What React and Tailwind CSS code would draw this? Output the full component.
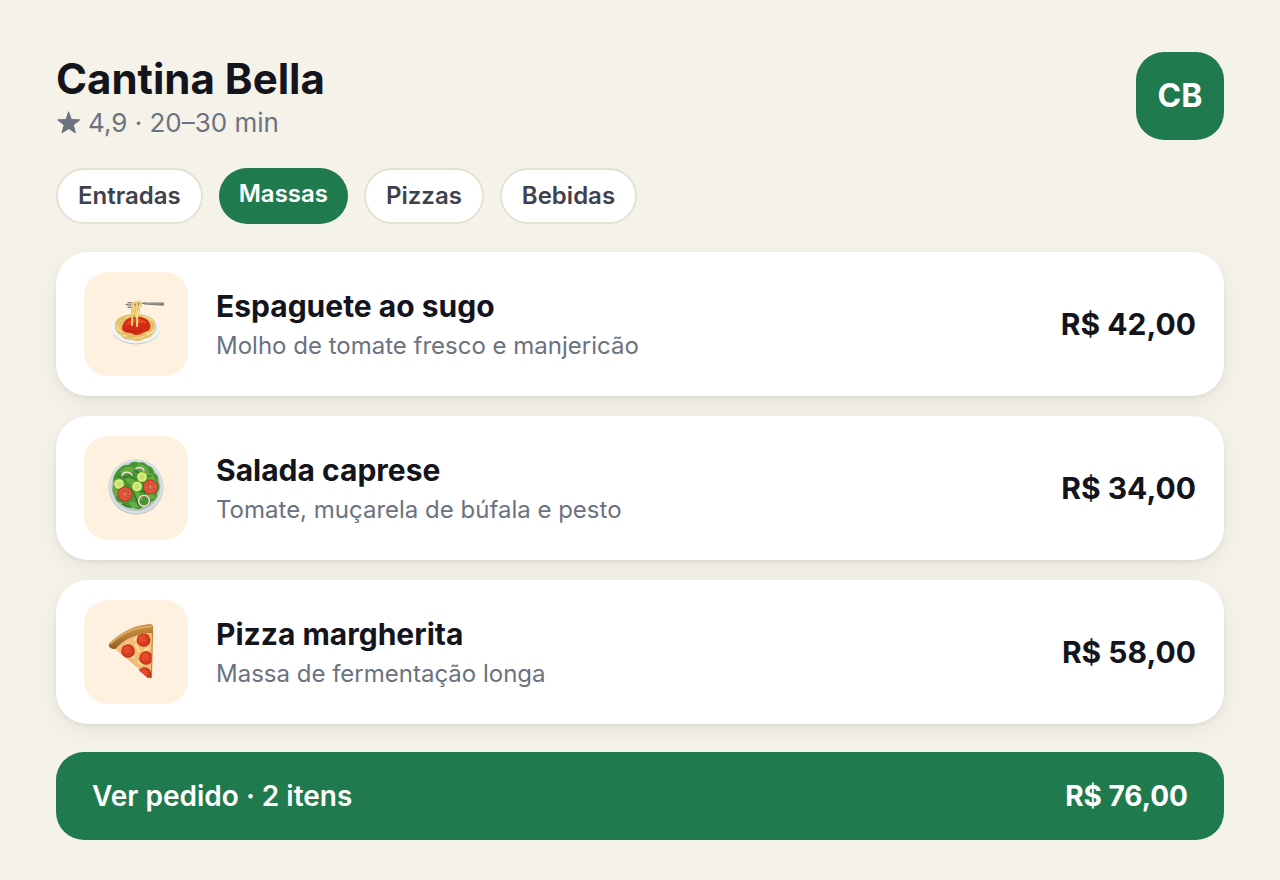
import React, { useState } from "react";
import clsx from "clsx";

function SpaghettiIcon() {
  return (
    <svg viewBox="0 1 72 66" className="w-[72px] h-[66px]" aria-hidden="true">
      <ellipse cx="36" cy="39.4" rx="24" ry="15" fill="#bcc6cc" />
      <ellipse cx="36" cy="38.2" rx="24.4" ry="15.2" fill="#f1f4f6" />
      <ellipse cx="36" cy="37.6" rx="21" ry="12.4" fill="#dde2e5" />
      <path d="M15 35c0-7 8-11 20-11 12 0 21 4 21 12 0 3-1 5-3 7 0 4-5 5-9 6-4 3-9 2-12 1-5 0-10-1-11-5-4-2-6-5-6-10z" fill="#e6c36a" />
      <g fill="none" stroke="#f7e19a" strokeWidth="1.2" strokeLinecap="round">
        <path d="M17 37c0-6 6-9 12-10M18 40c3 4 8 5 12 5M23 45c5 3 11 4 17 1M34 48c6 0 11-2 14-6M43 26c7 2 11 5 11 10M54 34c2 4-1 9-6 11M18 33c-2 4 0 8 4 9M45 45c4-1 7-3 8-6" />
      </g>
      <g fill="none" stroke="#b88a35" strokeWidth=".5" strokeLinecap="round">
        <path d="M18 41c4 3 8 4 13 4M26 47c7 1 14 0 20-3M51 31c4 4 3 8-1 11M17 34c1-3 4-5 8-6" />
      </g>
      <path d="M22 38c1-6 4-10 11-11 8-1 14 1 16 5 2 3 2 7-1 9-3 1-4 1-7 3-4 2-7 1-10-1-4 0-9-1-9-5z" fill="#d32c15" />
      <path d="M26 35c2-4 6-6 11-6 5 0 9 2 10 5-4-2-7 0-10-1-4-1-6 0-11 2z" fill="#e94a26" />
      <path d="M27 40c5 1 9 3 15 0" fill="none" stroke="#b21e0f" strokeWidth=".8" />
      <path d="M62 13.2 43 13.4c-6-.4-11-1.4-15-.6M41 13.4c-5 1-9 2.6-15 1M40 14.5c-3 2-7 3.5-12 2.6" fill="none" stroke="#777778" strokeWidth="1.3" strokeLinecap="round" />
      <path d="m44 12.5 18-.3c3 0 3 3.6 0 3.6l-18-1.400z" fill="#85817d" />
      <path d="m46 12.9 16-.2" stroke="#d1cecb" strokeWidth=".7" />
      <g fill="none" strokeLinecap="round">
        <path d="M33 15c-2 5 0 11-1 20M37 12c-1 8 1 14 0 24M40 14c-2 6-1 9-3 14M33 13c1 7 2 11 4 16" stroke="#d3a849" strokeWidth="2.2" />
        <path d="M33 15c-2 5 0 11-1 20M37 12c-1 8 1 14 0 24M40 14c-2 6-1 9-3 14M33 13c1 7 2 11 4 16" stroke="#f8dc8c" strokeWidth="1.4" />
        <path d="M32 15c2-3 7-5 9-2 2 4-4 5-8 4" stroke="#efd07b" strokeWidth="1.8" />
      </g>
    </svg>
  );
}

function SaladIcon() {
  return (
    <svg viewBox="0 2 72 72" className="w-[72px] h-[72px]" aria-hidden="true">
      <circle cx="36" cy="37" r="27.5" fill="#aeb8bd" />
      <circle cx="36" cy="36.5" r="27.3" fill="#d6dfe2" />
      <circle cx="36" cy="36.5" r="24.5" fill="#b9c6bf" />
      <path d="M20 18c3-4 7-3 9-3 2-4 7-4 10-2 4-2 7 1 9 3 4 0 6 4 6 7 5 2 4 7 4 9 3 4 1 8-1 11 1 5-3 8-6 9-1 4-5 4-7 4-3 4-8 4-11 1-5 2-9-1-11-4-5 0-7-4-7-8-3-3-3-8-1-11-2-6 1-12 6-16z" fill="#479633" />
      <g fill="#65ad3e">
        <path d="M20 22c4-6 9-6 15-4-2 6-8 8-15 4zM37 15c6-2 11 2 12 8-7 1-11-2-12-8zM46 23c6-1 9 4 10 9-6 0-9-3-10-9zM26 29c5-2 9 0 10 5-5 2-9 0-10-5zM14 36c5 2 5 8 2 11-4-4-4-8-2-11zM34 42c5-1 9 3 9 8-6 1-9-3-9-8zM45 45c5-3 9-1 10 2-4 4-7 3-10-2zM29 52c5-1 9 1 10 5-4 3-9 1-10-5z" />
      </g>
      <g fill="none" stroke="#2b7528" strokeWidth="1.2" strokeLinecap="round">
        <path d="M18 26c5 2 10 1 14-1M31 28c6 0 10 3 14 6M35 20c4 4 8 7 16 6M27 37c4 4 10 5 17 4M34 43c2 5 3 8 5 13M22 54c3 2 6 3 9 3M43 36c0 3 0 5 2 8" />
      </g>
      <g fill="none" strokeLinecap="round">
        <path d="M22 26c2-5 8-5 10-1M36 19c4-2 7-1 8 2" stroke="#c795a0" strokeWidth="1.8" />
        <path d="M22 25c2-4 7-4 10 0M36 18c4-1 7 0 8 2" stroke="#f5edda" strokeWidth="1.1" />
        <circle cx="44" cy="51" r="5.4" stroke="#bb8990" strokeWidth="1.6" />
        <circle cx="44" cy="50.7" r="5.4" stroke="#edf0d1" strokeWidth="1.1" />
      </g>
      {[[19, 34], [37, 36.5], [42, 27]].map(([x, y]) => (
        <g key={x}>
          <circle cx={x} cy={y} r="5.4" fill="#6cac35" />
          <circle cx={x} cy={y} r="4.8" fill="#d8ec82" />
          <circle cx={x} cy={y} r="2.600" fill="#c6e070" />
        </g>
      ))}
      {[[25, 44], [50.5, 37]].map(([x, y]) => (
        <g key={x}>
          <circle cx={x} cy={y} r="7.500" fill="#c23a25" />
          <circle cx={x} cy={y} r="6.500" fill="#e0583f" />
          <circle cx={x} cy={y} r="4.500" fill="#cf4630" />
          <path d={`M${x} ${y - 5}v10M${x - 5} ${y}h10M${x - 3} ${y - 3}l6 6M${x + 3} ${y - 3}l-6 6`} stroke="#ee8a68" strokeWidth=".6" />
        </g>
      ))}
    </svg>
  );
}

function PizzaIcon() {
  return (
    <svg viewBox="0 2 72 72" className="w-[72px] h-[72px]" aria-hidden="true">
      <defs>
        <linearGradient id="crust" x1="0" y1="0" x2=".3" y2="1">
          <stop offset="0" stopColor="#cf9a4e" />
          <stop offset=".5" stopColor="#bd8238" />
          <stop offset="1" stopColor="#8c581f" />
        </linearGradient>
        <clipPath id="slice">
          <path d="M15 35C25 25 38 19 52 19l-1 44-3 1z" />
        </clipPath>
      </defs>
      <path d="M15 34 50 64c1 1 2 0 2-1l1-45z" fill="#bd7c2d" />
      <path d="M15 35C25 25 38 19 52 19l-1 43-2 1z" fill="#f3bd76" />
      <g clipPath="url(#slice)">
        <path d="m24 33 4-4M30 40l4 4M36 31l3 6M38 48l4 2M45 36l4-2M34 26l4-3" stroke="#ffdc94" strokeWidth="2" strokeLinecap="round" />
        {[[43.5, 26], [28, 37], [46, 44], [44.5, 60]].map(([x, y]) => (
          <g key={y}>
            <circle cx={x} cy={y} r="6.800" fill="#b32c17" />
            <circle cx={x - 0.2} cy={y - 0.3} r="6" fill="#d93a22" />
            <circle cx={x - 1} cy={y - 1} r="3.8" fill="#e54a2b" />
          </g>
        ))}
      </g>
      <path d="M9 30C20 18 35 11 50 10c2 0 3 1 3 3v6c-15 0-27 5-38 16-4 0-7-2-6-5z" fill="url(#crust)" />
      <path d="M11 29C22 19 35 13 51 12.500" fill="none" stroke="#dbaa60" strokeWidth="2" strokeLinecap="round" />
    </svg>
  );
}

const categorias = ["Entradas", "Massas", "Pizzas", "Bebidas"];

const pratos = [
  { nome: "Espaguete ao sugo", descricao: "Molho de tomate fresco e manjericão", preco: "R$ 42,00", Icon: SpaghettiIcon },
  { nome: "Salada caprese", descricao: "Tomate, muçarela de búfala e pesto", preco: "R$ 34,00", Icon: SaladIcon },
  { nome: "Pizza margherita", descricao: "Massa de fermentação longa", preco: "R$ 58,00", Icon: PizzaIcon },
];

export default function App() {
  const [ativa, setAtiva] = useState("Massas");

  return (
    <main className="min-h-screen bg-[#f5f2e9] px-14 pt-[52px] pb-10 font-['Inter',sans-serif] text-[#14141d]">
      <header className="flex items-center justify-between">
        <div>
          <h1 className="text-[42px] leading-[54px] font-bold">Cantina Bella</h1>
          <p className="flex items-center gap-2 text-[26px] leading-[34px] text-[#6b7280]">
            <svg viewBox="0 0 24 24" className="size-6" fill="currentColor" aria-hidden="true">
              <path d="M13 .8 15.700 8l7.600.3c.7 0 .9.700.4 1.100l-5.900 4.700 2 7.300c.2.700-.4 1.100-1 .7L12.800 18l-6.200 4.100c-.6.400-1.200 0-1-.7l2-7.300-5.900-4.700c-.5-.4-.3-1.100.4-1.100L9.700 8l2.500-7.200c.2-.5.6-.5.8 0z" />
            </svg>
            4,9 · 20–30 min
          </p>
        </div>
        <div className="flex size-[88px] items-center justify-center rounded-[28px] bg-[#1f7a4d] text-[32px] font-bold text-white">
          CB
        </div>
      </header>

      <nav className="mt-7 flex gap-4" aria-label="Categorias">
        {categorias.map(c => (
          <button
            key={c}
            type="button"
            aria-pressed={c === ativa}
            onClick={() => setAtiva(c)}
            className={clsx(
              "rounded-full px-5 text-[24px] leading-7 font-semibold",
              c === ativa
                ? "bg-[#1f7a4d] pt-3 pb-4 text-white"
                : "border-2 border-[#e4e2d4] bg-white py-3 text-[#3f424d]"
            )}
          >
            {c}
          </button>
        ))}
      </nav>

      <ul className="mt-7 flex flex-col gap-5">
        {pratos.map(({ nome, descricao, preco, Icon }) => (
          <li
            key={nome}
            className="flex items-center gap-7 rounded-[32px] bg-white px-7 py-5 shadow-[0_2px_4px_rgba(20,20,20,0.06),0_8px_24px_rgba(20,20,20,0.06)]"
          >
            <div className="flex size-[104px] items-center justify-center rounded-3xl bg-[#fff1e0]">
              <Icon />
            </div>
            <div className="flex-1 pt-1">
              <h2 className="text-[30px] leading-10 font-bold">{nome}</h2>
              <p className="text-[24px] leading-10 text-[#6b7280]">{descricao}</p>
            </div>
            <span className="text-[30px] leading-10 font-bold">{preco}</span>
          </li>
        ))}
      </ul>

      <button
        type="button"
        className="mt-7 flex w-full items-center justify-between rounded-[28px] bg-[#1f7a4d] px-9 py-6 text-[28px] leading-10 text-white"
      >
        <span className="font-semibold">Ver pedido · 2 itens</span>
        <span className="font-bold">R$ 76,00</span>
      </button>
    </main>
  );
}
